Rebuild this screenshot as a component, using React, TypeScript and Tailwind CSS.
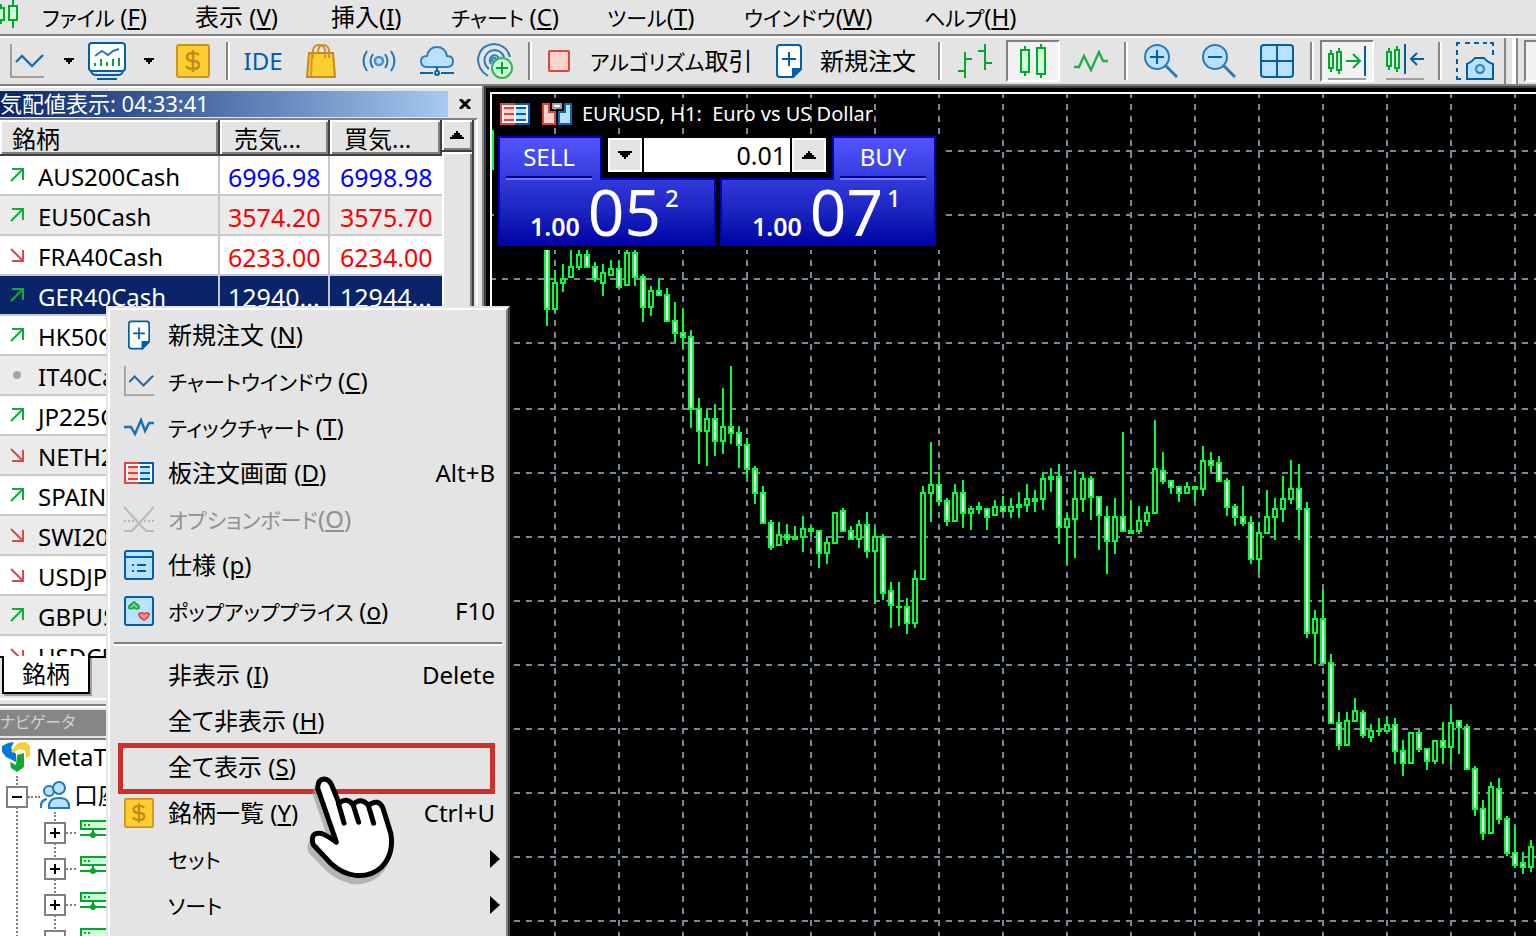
import type { ReactNode } from 'react';
import clsx from 'clsx';

type CandleKind = 'up' | 'down' | 'flat';
// high, body top, body bottom, low, kind
type Candle = [number, number, number, number, CandleKind];
type Direction = 'up' | 'down' | 'none';

interface SymbolRow {
    name: string;
    direction: Direction;
    bid?: string;
    ask?: string;
    tone?: 'blue' | 'red';
    selected?: boolean;
}

interface MenuEntry {
    label: string;
    mnemonic?: string;
    shortcut?: string;
    icon?: ReactNode;
    kana?: boolean;
    disabled?: boolean;
    submenu?: boolean;
    marked?: boolean;
}

const CHART_LEFT = 492;
const CHART_TOP = 94;

const CANDLES: Candle[] = [
    [250, 248, 310, 326, 'down'], [270, 282, 310, 312, 'up'], [264, 278, 284, 292, 'up'], [250, 266, 278, 278, 'up'],
    [250, 254, 268, 270, 'up'], [250, 254, 268, 268, 'down'], [262, 266, 280, 282, 'down'], [264, 272, 284, 296, 'up'],
    [260, 268, 276, 276, 'up'], [260, 268, 288, 288, 'down'], [250, 252, 286, 286, 'up'], [250, 252, 278, 286, 'down'],
    [274, 276, 308, 322, 'down'], [286, 290, 308, 316, 'up'], [278, 290, 296, 296, 'down'], [288, 294, 322, 322, 'down'],
    [302, 320, 334, 342, 'down'], [308, 332, 338, 348, 'down'], [330, 336, 410, 428, 'down'], [398, 408, 432, 464, 'down'],
    [410, 418, 432, 466, 'up'], [404, 418, 442, 456, 'down'], [388, 426, 442, 454, 'up'], [366, 426, 434, 444, 'down'],
    [426, 432, 446, 468, 'down'], [438, 444, 470, 478, 'down'], [466, 468, 494, 504, 'down'], [486, 492, 524, 524, 'down'],
    [520, 522, 548, 550, 'down'], [522, 534, 546, 546, 'up'], [524, 534, 540, 544, 'down'], [526, 536, 540, 540, 'flat'],
    [516, 528, 538, 552, 'up'], [526, 528, 532, 536, 'flat'], [530, 530, 554, 568, 'down'], [538, 542, 554, 564, 'up'],
    [512, 512, 544, 544, 'up'], [508, 510, 532, 532, 'down'], [526, 530, 540, 540, 'down'], [520, 524, 540, 548, 'up'],
    [512, 524, 552, 558, 'down'], [528, 536, 552, 604, 'up'], [534, 536, 594, 600, 'down'], [582, 590, 606, 628, 'down'],
    [582, 606, 608, 626, 'flat'], [598, 606, 624, 634, 'down'], [570, 578, 624, 628, 'up'], [486, 492, 580, 580, 'up'],
    [442, 484, 494, 522, 'up'], [472, 484, 502, 506, 'down'], [498, 500, 522, 526, 'down'], [484, 492, 522, 522, 'up'],
    [480, 492, 514, 528, 'down'], [506, 508, 514, 530, 'up'], [502, 506, 510, 514, 'flat'], [508, 508, 518, 530, 'down'],
    [500, 506, 516, 516, 'up'], [496, 506, 512, 512, 'down'], [498, 506, 512, 518, 'up'], [492, 504, 508, 518, 'flat'],
    [484, 498, 506, 512, 'up'], [490, 498, 502, 512, 'flat'], [472, 478, 500, 510, 'up'], [468, 476, 480, 492, 'flat'],
    [464, 476, 528, 544, 'down'], [514, 518, 528, 564, 'up'], [470, 498, 520, 558, 'up'], [472, 478, 500, 512, 'up'],
    [476, 478, 498, 520, 'down'], [496, 496, 516, 550, 'down'], [506, 516, 542, 574, 'down'], [498, 516, 542, 554, 'up'],
    [432, 516, 532, 532, 'down'], [500, 530, 534, 534, 'flat'], [506, 520, 532, 534, 'up'], [506, 512, 522, 526, 'up'],
    [420, 468, 514, 514, 'up'], [452, 470, 482, 484, 'down'], [480, 480, 488, 494, 'down'], [486, 486, 494, 502, 'down'],
    [482, 486, 494, 494, 'up'], [486, 486, 490, 502, 'flat'], [446, 460, 490, 496, 'up'], [452, 460, 466, 472, 'down'],
    [456, 462, 482, 482, 'down'], [478, 480, 508, 516, 'down'], [504, 506, 518, 526, 'down'], [486, 516, 524, 526, 'down'],
    [516, 522, 560, 564, 'down'], [522, 532, 560, 572, 'up'], [490, 516, 534, 534, 'up'], [498, 508, 518, 540, 'up'],
    [476, 498, 510, 522, 'up'], [460, 488, 500, 504, 'up'], [464, 488, 510, 540, 'down'], [502, 508, 634, 638, 'down'],
    [610, 618, 634, 664, 'up'], [590, 618, 664, 664, 'down'], [654, 662, 724, 724, 'down'], [712, 722, 746, 750, 'down'],
    [712, 720, 746, 746, 'up'], [698, 710, 722, 722, 'up'], [710, 712, 736, 738, 'down'], [724, 730, 738, 742, 'up'],
    [718, 730, 732, 736, 'flat'], [716, 724, 732, 732, 'up'], [718, 724, 752, 764, 'down'], [740, 750, 764, 776, 'down'],
    [732, 732, 764, 764, 'up'], [730, 732, 750, 752, 'down'], [748, 748, 762, 770, 'down'], [740, 740, 762, 764, 'up'],
    [722, 740, 748, 764, 'down'], [708, 722, 748, 764, 'up'], [720, 720, 728, 754, 'down'], [724, 726, 770, 770, 'down'],
    [766, 768, 810, 816, 'down'], [800, 808, 834, 840, 'down'], [782, 786, 834, 834, 'up'], [778, 788, 820, 824, 'down'],
    [816, 818, 854, 856, 'down'], [826, 852, 866, 868, 'down'], [852, 862, 868, 874, 'down'], [840, 846, 868, 872, 'up'],
];

const GRID_X = Array.from({ length: 32 }, (_, i) => 555 + i * 64);
const GRID_Y = [151, 215, 279, 343, ...Array.from({ length: 20 }, (_, i) => 409 + i * 64)];

const SYMBOLS: SymbolRow[] = [
    { name: 'AUS200Cash', direction: 'up', bid: '6996.98', ask: '6998.98', tone: 'blue' },
    { name: 'EU50Cash', direction: 'up', bid: '3574.20', ask: '3575.70', tone: 'red' },
    { name: 'FRA40Cash', direction: 'down', bid: '6233.00', ask: '6234.00', tone: 'red' },
    { name: 'GER40Cash', direction: 'up', bid: '12940...', ask: '12944...', selected: true },
    { name: 'HK50Cash', direction: 'up' },
    { name: 'IT40Cash', direction: 'none' },
    { name: 'JP225Cash', direction: 'up' },
    { name: 'NETH25Cash', direction: 'down' },
    { name: 'SPAIN35Cash', direction: 'up' },
    { name: 'SWI20Cash', direction: 'down' },
    { name: 'USDJPY', direction: 'down' },
    { name: 'GBPUSD', direction: 'up' },
    { name: 'USDCHF', direction: 'down' },
];

const MENU_BAR = [
    { label: 'ファイル ', key: 'F', width: 'w-[153px]', kana: true },
    { label: '表示 ', key: 'V', width: 'w-[136px]' },
    { label: '挿入', key: 'I', width: 'w-[120px]' },
    { label: 'チャート ', key: 'C', width: 'w-[156px]', kana: true },
    { label: 'ツール', key: 'T', width: 'w-[137px]', kana: true },
    { label: 'ウインドウ', key: 'W', width: 'w-[180px]', kana: true },
    { label: 'ヘルプ', key: 'H', width: 'w-[120px]', kana: true },
];

/* ---------- icons ---------- */

function LineChartIcon({ className }: { className?: string }) {
    return (
        <svg viewBox="0 0 34 34" className={className} fill="none" strokeWidth="2">
            <path d="M1 0V33H34" stroke="#a0a0a0" />
            <path d="M6 18L12 12L22 22L33 11" stroke="#1a6fb0" strokeWidth="2.4" />
        </svg>
    );
}

function MonitorChartIcon() {
    return (
        <svg viewBox="0 0 38 38" className="h-[38px] w-[38px]" fill="none" strokeWidth="2">
            <rect x="1" y="1" width="36" height="28" rx="3" fill="#fff" stroke="#005fa8" />
            <path d="M7 14L14 9L20 13L25 9L31 7" stroke="#2a7ab5" />
            <path d="M7 24V21M13 24V17M19 24V20M25 24V17M31 24V16" stroke="#00a82d" />
            <path d="M3 29Q4 33 8 33H30Q34 33 35 29M9 37H29" stroke="#005fa8" />
        </svg>
    );
}

function DollarIcon({ className }: { className?: string }) {
    return (
        <svg viewBox="0 0 34 34" className={className} fill="none">
            <rect x="1" y="1" width="32" height="32" rx="2" fill="#fccf2f" stroke="#d0901c" strokeWidth="2" />
            <path d="M23 11Q21 9 17 9Q11 9 11 13Q11 17 17 17Q23 17 23 21Q23 25 17 25Q12 25 10 22M17 6V28" stroke="#c98a1c" strokeWidth="2.6" />
        </svg>
    );
}

function BagIcon() {
    return (
        <svg viewBox="0 0 30 34" className="h-[34px] w-[30px]" fill="none" strokeWidth="2">
            <path d="M3 9H27L29 33H1Z" fill="#fccf2f" stroke="#c9871c" />
            <path d="M6 10L5 32" stroke="#d79a24" />
            <path d="M7 14V6Q8 1 13 1Q18 1 19 6V14M12 9Q12 1 17 1Q22 1 23 6V14" stroke="#c9903a" />
        </svg>
    );
}

function SignalIcon() {
    return (
        <svg viewBox="0 0 34 22" className="h-[22px] w-[34px]" fill="none" stroke="#2376b4" strokeWidth="2">
            <circle cx="17" cy="11" r="4" fill="#b9e2ff" stroke="#4b90c4" strokeWidth="2.6" />
            <path d="M5 1Q-2 11 5 21M11 4Q6 11 11 18M29 1Q36 11 29 21M23 4Q28 11 23 18" />
        </svg>
    );
}

function CloudIcon() {
    return (
        <svg viewBox="0 0 34 30" className="h-[30px] w-[34px]" fill="none" stroke="#0a64aa" strokeWidth="2">
            <path d="M7 21Q1 21 1 15Q1 10 7 10Q9 1 17 1Q25 1 27 10Q33 10 33 15Q33 21 27 21Z" fill="#b9e2ff" stroke="#2f7fba" />
            <path d="M17 21V25M0 27H13M21 27H34" />
            <circle cx="17" cy="27" r="2" />
        </svg>
    );
}

function RadarIcon() {
    return (
        <svg viewBox="0 0 36 36" className="h-9 w-9" fill="none" strokeWidth="2">
            <path d="M11 33Q1 27 1 16Q3 2 17 1Q30 2 33 14M12 26Q6 21 8 14Q11 7 18 7Q25 8 27 14M14 21Q11 16 15 13Q19 11 22 15" stroke="#2f7cb8" />
            <circle cx="17" cy="17" r="2" stroke="#2f7cb8" fill="#b9e2ff" />
            <circle cx="25" cy="25" r="10" fill="#cfffd8" stroke="#2fb850" />
            <path d="M25 19V31M19 25H31" stroke="#00a82d" />
        </svg>
    );
}

function StopIcon() {
    return (
        <svg viewBox="0 0 22 22" className="h-[22px] w-[22px]">
            <rect x="1" y="1" width="20" height="20" rx="1" fill="#ffd3cb" stroke="#e0443a" strokeWidth="2" />
        </svg>
    );
}

function NewOrderIcon({ className }: { className?: string }) {
    return (
        <svg viewBox="0 0 26 34" className={className} fill="none" stroke="#005fa8" strokeWidth="2">
            <path d="M4 1H22Q25 1 25 4V25L17 33H4Q1 33 1 30V4Q1 1 4 1Z" fill="#fff" />
            <path d="M17 33V25H25Z" fill="#005fa8" />
            <path d="M13 8V22M6 15H20" />
        </svg>
    );
}

function BarsIcon() {
    return (
        <svg viewBox="0 0 34 34" className="h-[34px] w-[34px]" fill="none" stroke="#00a82d" strokeWidth="2">
            <path d="M7 8V34M0 27H7M7 15H14M27 0V26M20 7H27M27 19H34" />
        </svg>
    );
}

function CandlesIcon() {
    return (
        <svg viewBox="0 0 28 34" className="h-[34px] w-7" fill="#cfffd8" stroke="#00a82d" strokeWidth="2">
            <path d="M6 2V6M6 28V32M22 0V4M22 30V34" />
            <rect x="2" y="6" width="8" height="22" />
            <rect x="18" y="4" width="8" height="26" />
        </svg>
    );
}

function ZigzagIcon() {
    return (
        <svg viewBox="0 0 34 22" className="h-[22px] w-[34px]" fill="none" stroke="#20b045" strokeWidth="2.4">
            <path d="M0 17H5L10 6L17 20L25 2L29 11H34" />
        </svg>
    );
}

function ZoomIcon({ plus }: { plus?: boolean }) {
    return (
        <svg viewBox="0 0 34 34" className="h-[34px] w-[34px]" fill="none" stroke="#005fa8" strokeWidth="2">
            <circle cx="13" cy="13" r="12" fill="#b9e2ff" stroke="#2b7bb6" />
            <path d="M22 22L33 33" stroke="#2b7bb6" strokeWidth="3" />
            <path d="M6 13H20" />
            {plus && <path d="M13 6V20" />}
        </svg>
    );
}

function TilesIcon() {
    return (
        <svg viewBox="0 0 34 34" className="h-[34px] w-[34px]" fill="none" stroke="#005fa8" strokeWidth="2">
            <rect x="1" y="1" width="32" height="32" rx="3" fill="#b9e2ff" />
            <path d="M17 1V33M1 17H33" />
        </svg>
    );
}

function AutoScrollIcon() {
    return (
        <svg viewBox="0 0 38 38" className="h-[38px] w-[38px]" fill="none" stroke="#00a82d" strokeWidth="2">
            <path d="M3 8V12M3 26V30M11 6V10M11 28V32" />
            <path d="M1 12H5V26H1ZM9 10H13V28H9Z" fill="#cfffd8" />
            <path d="M18 19H31M25 12L32 19L25 26" />
            <path d="M37 4V34" stroke="#005fa8" />
            <path d="M0 37H38" stroke="#a0a0a0" />
        </svg>
    );
}

function ChartShiftIcon() {
    return (
        <svg viewBox="0 0 38 38" className="h-[38px] w-[38px]" fill="none" stroke="#00a82d" strokeWidth="2">
            <path d="M3 6V10M3 24V28M11 4V8M11 26V30" />
            <path d="M1 10H5V24H1ZM9 8H13V26H9Z" fill="#cfffd8" />
            <path d="M19 2V32M25 17H38M31 11L25 17L31 23" stroke="#005fa8" />
            <path d="M0 37H38" stroke="#a0a0a0" />
        </svg>
    );
}

function CameraIcon() {
    return (
        <svg viewBox="0 0 38 38" className="h-[38px] w-[38px]" fill="none" stroke="#005fa8" strokeWidth="2">
            <path d="M1 4V1H4M9 1H14M18 1H23M27 1H31M34 1H37V4M37 8V13M1 8V13M1 17V22M1 26V30M1 34V37H5" />
            <path d="M11 37V22Q16 20 19 16H28Q31 20 37 22V37Z" fill="#b9e2ff" />
            <circle cx="24" cy="27" r="4" stroke="#3c86bc" strokeWidth="2.4" />
        </svg>
    );
}

function TickChartIcon() {
    return (
        <svg viewBox="0 0 30 20" className="h-5 w-[30px]" fill="none" stroke="#1a6fb0" strokeWidth="2.4">
            <path d="M0 10H7L11 17L17 3L21 14L25 6H30" />
        </svg>
    );
}

function DepthIcon() {
    return (
        <svg viewBox="0 0 30 22" className="h-[22px] w-[30px]" fill="none" strokeWidth="2">
            <path d="M0 0H15V22H0Z" fill="#e0443a" />
            <path d="M15 0H30V22H15Z" fill="#005fa8" />
            <path d="M2 2H28V20H2Z" fill="#fff" />
            <path d="M4 4H14V18H4Z" fill="#ffd3cb" />
            <path d="M16 4H26V18H16Z" fill="#b9e2ff" />
            <path d="M4 5H14M4 11H14M4 17H14" stroke="#e0443a" />
            <path d="M16 5H26M16 11H26M16 17H26" stroke="#005fa8" />
        </svg>
    );
}

function OneClickIcon() {
    return (
        <svg viewBox="0 0 30 22" className="h-[22px] w-[30px]" fill="none" strokeWidth="2">
            <path d="M1 1H7V9H13V21H1Z" fill="#ffd3cb" stroke="#e0443a" />
            <path d="M29 1H23V9H17V21H29Z" fill="#b9e2ff" stroke="#0a68b0" />
            <path d="M10 0H20V6H10Z" fill="#a0a0a0" />
            <path d="M12 3H18" stroke="#fff" />
        </svg>
    );
}

function OptionsIcon() {
    return (
        <svg viewBox="0 0 30 26" className="h-[26px] w-[30px]" fill="none" stroke="#b8b8b8" strokeWidth="2">
            <path d="M0 1L22 25H30M30 1L8 25H0" />
            <path d="M0 15H30" strokeDasharray="2 2" />
        </svg>
    );
}

function SpecIcon() {
    return (
        <svg viewBox="0 0 30 30" className="h-[30px] w-[30px]" fill="none" stroke="#005fa8" strokeWidth="2">
            <rect x="1" y="1" width="28" height="28" rx="2" fill="#b9e2ff" />
            <path d="M1 7H29M8 15H10M13 15H22M8 21H10M13 21H22" />
        </svg>
    );
}

function PopupPricesIcon() {
    return (
        <svg viewBox="0 0 30 30" className="h-[30px] w-[30px]" fill="none" strokeWidth="2">
            <rect x="1" y="1" width="28" height="28" rx="2" fill="#b9e2ff" stroke="#005fa8" />
            <path d="M5 12Q5 9 8 8Q10 4 12 8Q15 9 15 12Q12 14 10 11Q8 14 5 12Z" fill="#7fdc98" stroke="#20a845" />
            <path d="M15 18Q17 16 20 18Q23 16 25 18Q25 21 20 24Q15 21 15 18Z" fill="#ff9d94" stroke="#dd4d48" />
        </svg>
    );
}

function DirectionIcon({ direction }: { direction: Direction }) {
    if (direction === 'none') {
        return <span className="mx-[3px] block h-2 w-2 rounded-full bg-[#a5a5a5]" />;
    }
    return (
        <svg viewBox="0 0 14 14" className="h-3.5 w-3.5" fill="none" strokeWidth="2">
            {direction === 'up' ? (
                <path d="M2 1H13V12M13 1L1 13" stroke="#12ab3b" />
            ) : (
                <path d="M13 2V13H2M1 1L13 13" stroke="#dd4840" />
            )}
        </svg>
    );
}

function MetaTraderIcon() {
    return (
        <svg viewBox="0 0 28 30" className="h-[30px] w-7">
            <path d="M0 4L6 1L12 0L9 6L14 12V20L4 15L0 10Z" fill="#0878d8" />
            <path d="M9 9L16 1L24 0L28 4V14L24 16L23 8L17 7L11 11Z" fill="#fccf2f" />
            <path d="M8 20L14 23L15 13L22 11V25L15 30L9 26Z" fill="#10a835" />
        </svg>
    );
}

function UsersIcon() {
    return (
        <svg viewBox="0 0 30 28" className="h-7 w-[30px] shrink-0" fill="#b9e2ff" stroke="#2279b8" strokeWidth="2">
            <circle cx="9" cy="10" r="5" />
            <path d="M1 27Q0 19 7 18" />
            <circle cx="19" cy="7" r="6" />
            <path d="M9 27Q8 17 19 17Q30 17 29 27Z" />
        </svg>
    );
}

function ServerIcon() {
    return (
        <svg viewBox="0 0 28 18" className="mb-2 h-[18px] w-7 shrink-0" fill="none" stroke="#00a82d" strokeWidth="2">
            <rect x="1" y="1" width="28" height="8" fill="#cfffd8" />
            <path d="M4 5H6M8 5H10M13 9V13M0 15H28" />
            <circle cx="13" cy="15" r="2" />
        </svg>
    );
}

function HandPointer() {
    return (
        <svg viewBox="50 640 270 340" className="pointer-events-none absolute left-[199px] top-[466px] h-[113px] w-[90px]" strokeLinejoin="round" strokeLinecap="round">
            <path
                transform="translate(-8 18)"
                d="M138 845L82 684Q82 656 100 655Q116 655 124 674L146 735Q165 708 190 735Q212 708 236 735Q266 708 280 742L302 830Q310 890 270 925Q235 952 190 945Q150 935 120 908L68 855Q60 815 95 820Z"
                fill="#9a9d9d"
                stroke="#9a9d9d"
                strokeWidth="14"
                opacity="0.65"
            />
            <path
                d="M138 845L82 684Q82 656 100 655Q116 655 124 674L146 728Q168 708 188 732Q212 708 234 734Q264 712 278 742L302 820Q312 880 274 920Q240 950 195 945Q155 940 120 908L68 852Q58 815 92 819Q108 824 138 845Z"
                fill="#fff"
                stroke="#000"
                strokeWidth="15"
            />
            <path d="M144 728L161 788M188 732L205 785M234 734L250 788" fill="none" stroke="#000" strokeWidth="15" />
        </svg>
    );
}

const CONTEXT_MENU: MenuEntry[][] = [
    [
        { label: '新規注文 ', mnemonic: 'N', icon: <NewOrderIcon className="h-[30px] w-[22px]" /> },
        { label: 'チャートウインドウ ', mnemonic: 'C', icon: <LineChartIcon className="h-[30px] w-[30px]" />, kana: true },
        { label: 'ティックチャート ', mnemonic: 'T', icon: <TickChartIcon />, kana: true },
        { label: '板注文画面 ', mnemonic: 'D', shortcut: 'Alt+B', icon: <DepthIcon /> },
        { label: 'オプションボード', mnemonic: 'O', icon: <OptionsIcon />, kana: true, disabled: true },
        { label: '仕様 ', mnemonic: 'p', icon: <SpecIcon /> },
        { label: 'ポップアッププライス ', mnemonic: 'o', shortcut: 'F10', icon: <PopupPricesIcon />, kana: true },
    ],
    [
        { label: '非表示 ', mnemonic: 'I', shortcut: 'Delete' },
        { label: '全て非表示 ', mnemonic: 'H' },
        { label: '全て表示 ', mnemonic: 'S', marked: true },
        { label: '銘柄一覧 ', mnemonic: 'Y', shortcut: 'Ctrl+U', icon: <DollarIcon className="h-[30px] w-[30px]" /> },
        { label: 'セット', submenu: true, kana: true },
        { label: 'ソート', submenu: true, kana: true },
    ],
];

/* ---------- building blocks ---------- */

function Mnemonic({ label, char, kana }: { label: string; char?: string; kana?: boolean }) {
    return (
        <span className="whitespace-pre">
            <span className={clsx(kana && 'text-[21px]')}>{label}</span>
            {char && (
                <>
                    (<u className="decoration-2 underline-offset-2">{char}</u>)
                </>
            )}
        </span>
    );
}

function Caret({ up }: { up?: boolean }) {
    return (
        <svg viewBox="0 0 14 8" className={clsx('h-2 w-3.5', up && 'rotate-180')} shapeRendering="crispEdges">
            <path d="M0 0H14V2H12V4H10V6H8V8H6V6H4V4H2V2H0Z" fill="#000" />
        </svg>
    );
}

function DropButton({ label, className }: { label: string; className: string }) {
    return (
        <button type="button" aria-label={label} className={clsx('w-2.5 shrink-0', className)}>
            <svg viewBox="0 0 10 6" className="h-1.5 w-2.5" shapeRendering="crispEdges">
                <path d="M0 0H10V2H8V4H6V6H4V4H2V2H0Z" fill="#000" />
            </svg>
        </button>
    );
}

function Separator() {
    return <span className="mx-1 h-[38px] w-1 shrink-0 border-l-2 border-r-2 border-l-[#868686] border-r-white" />;
}

function ToolButton({ label, pressed, children }: { label: string; pressed?: boolean; children: ReactNode }) {
    return (
        <button type="button" aria-label={label} aria-pressed={pressed} className="flex h-[42px] w-[58px] shrink-0 items-center justify-center">
            {pressed ? (
                <span className="flex h-[42px] w-[54px] items-center justify-center border-2 border-b-white border-l-[#808080] border-r-white border-t-[#808080] bg-[#f2f2f2]">
                    {children}
                </span>
            ) : (
                children
            )}
        </button>
    );
}

function MenuBar() {
    return (
        <nav className="flex h-9 shrink-0 items-center border-b-2 border-[#808080]">
            <svg viewBox="0 0 20 28" className="mr-[22px] h-7 w-5 shrink-0 self-start" fill="#cfffd8" stroke="#00a82d" strokeWidth="2">
                <path d="M-2 8H4V20H-2ZM1 20V24M1 4V8" />
                <path d="M9 6H17V20H9ZM13 0V6M13 20V28" />
            </svg>
            {MENU_BAR.map((item) => (
                <button key={item.key} type="button" className={clsx('shrink-0 text-left', item.width)}>
                    <Mnemonic label={item.label} char={item.key} kana={item.kana} />
                </button>
            ))}
        </nav>
    );
}

function Toolbar() {
    return (
        <div className="flex h-[50px] shrink-0 items-center overflow-hidden border-b-2 border-t-2 border-b-[#808080] border-t-white pl-2.5">
            <button type="button" aria-label="Chart" className="shrink-0">
                <LineChartIcon className="h-[34px] w-[34px]" />
            </button>
            <DropButton label="Chart list" className="ml-5 mr-3.5" />
            <button type="button" aria-label="Profile" className="shrink-0">
                <MonitorChartIcon />
            </button>
            <DropButton label="Profile list" className="ml-[18px] mr-[22px]" />
            <button type="button" aria-label="Symbols" className="mr-3 shrink-0">
                <DollarIcon className="h-[34px] w-[34px]" />
            </button>
            <Separator />
            <ToolButton label="IDE">
                <span className="text-[#005fa8]">IDE</span>
            </ToolButton>
            <ToolButton label="Market"><BagIcon /></ToolButton>
            <ToolButton label="Signals"><SignalIcon /></ToolButton>
            <ToolButton label="VPS"><CloudIcon /></ToolButton>
            <ToolButton label="Copy"><RadarIcon /></ToolButton>
            <Separator />
            <button type="button" className="-ml-1 flex w-[228px] shrink-0 items-center gap-5 whitespace-nowrap pl-4">
                <StopIcon />
                <span>
                    <span className="text-[21px]">アルゴリズム</span>取引
                </span>
            </button>
            <button type="button" className="-mr-1 flex w-[178px] shrink-0 items-center gap-[18px] whitespace-nowrap pl-4">
                <NewOrderIcon className="h-[34px] w-[26px]" />
                新規注文
            </button>
            <Separator />
            <ToolButton label="Bars"><BarsIcon /></ToolButton>
            <ToolButton label="Candles" pressed><CandlesIcon /></ToolButton>
            <ToolButton label="Line"><ZigzagIcon /></ToolButton>
            <Separator />
            <ToolButton label="Zoom in"><ZoomIcon plus /></ToolButton>
            <ToolButton label="Zoom out"><ZoomIcon /></ToolButton>
            <ToolButton label="Tile windows"><TilesIcon /></ToolButton>
            <Separator />
            <ToolButton label="Auto scroll" pressed><AutoScrollIcon /></ToolButton>
            <ToolButton label="Chart shift"><ChartShiftIcon /></ToolButton>
            <Separator />
            <ToolButton label="Screenshot"><CameraIcon /></ToolButton>
            <span className="h-full w-3.5 shrink-0 border-l-2 border-r-2 border-[#868686] shadow-[inset_-4px_0_0_#fff]" />
            <span className="ml-1.5 h-[42px] w-14 shrink-0 border-2 border-b-white border-l-[#808080] border-t-[#808080] bg-[#f2f2f2]" />
        </div>
    );
}

function HeaderCell({ children, className }: { children: string; className: string }) {
    return (
        <th
            className={clsx(
                'h-9 border-b-2 border-r-2 border-[#404040] bg-[#e4e4e4] p-0 pt-1 text-left leading-7 font-normal shadow-[inset_2px_2px_0_#fff,inset_-2px_-2px_0_#808080]',
                className,
            )}
        >
            {children}
        </th>
    );
}

function PriceCell({ row, value, last }: { row: SymbolRow; value?: string; last?: boolean }) {
    return (
        <td
            className={clsx(
                'border-b-2 border-[#c8c8c8] p-0 pt-1 text-[25px]',
                last ? 'pl-2.5' : 'border-r-2 pl-2',
                row.tone === 'blue' && 'text-[#0000ff]',
                row.tone === 'red' && 'text-[#ff0000]',
            )}
        >
            {value}
        </td>
    );
}

function MarketWatch() {
    return (
        <section className="shrink-0 border-t-2 border-white">
            <div className="flex h-[30px] items-center pt-0.5">
                <h2 className="h-[26px] w-[448px] whitespace-nowrap bg-linear-to-r from-[#0a246a] to-[#a6caf0] text-[22px] leading-[24px] text-white">
                    気配値表示: 04:33:41
                </h2>
                <button type="button" aria-label="Close" className="flex flex-1 items-center justify-center">
                    <svg viewBox="0 0 12 10" className="h-2.5 w-3" stroke="#000" strokeWidth="3">
                        <path d="M1 0L11 10M11 0L1 10" />
                    </svg>
                </button>
            </div>
            <div className="flex h-[538px] w-[478px] overflow-hidden border-r-2 border-t-2 border-r-white border-t-[#808080]">
                <table className="w-[442px] shrink-0 table-fixed border-separate border-spacing-0 self-start bg-white">
                    <thead>
                        <tr>
                            <HeaderCell className="w-[220px] pl-3">銘柄</HeaderCell>
                            <HeaderCell className="w-[110px] pl-3.5">売気...</HeaderCell>
                            <HeaderCell className="w-[112px] pl-3.5">買気...</HeaderCell>
                        </tr>
                    </thead>
                    <tbody>
                        {SYMBOLS.map((row) => (
                            <tr key={row.name} className={clsx('h-10', row.selected ? 'bg-[#0a246a] text-white' : 'even:bg-[#ebebeb]')}>
                                <td className="border-b-2 border-r-2 border-[#c8c8c8] p-0">
                                    <div className="flex items-center gap-3.5 pl-2.5">
                                        <DirectionIcon direction={row.direction} />
                                        <span className="pt-1">{row.name}</span>
                                    </div>
                                </td>
                                <PriceCell row={row} value={row.bid} />
                                <PriceCell row={row} value={row.ask} last />
                            </tr>
                        ))}
                    </tbody>
                </table>
                <div className="flex w-8 flex-col">
                    <button
                        type="button"
                        aria-label="Scroll up"
                        className="flex h-8 items-center justify-center border-b-2 border-r-2 border-[#404040] shadow-[inset_2px_2px_0_#fff,inset_-2px_-2px_0_#808080]"
                    >
                        <Caret up />
                    </button>
                    <div className="flex-1 border-r-2 border-[#404040] shadow-[inset_2px_2px_0_#fff,inset_-2px_-2px_0_#808080]" />
                </div>
            </div>
            <div className="h-[42px] border-t-2 border-black pl-0.5">
                <button
                    type="button"
                    className="-mt-0.5 flex h-[38px] w-[88px] items-center justify-center border-2 border-t-0 border-black bg-white shadow-[2px_2px_0_#a0a0a0]"
                >
                    銘柄
                </button>
            </div>
        </section>
    );
}

function Expander({ open }: { open?: boolean }) {
    return (
        <button type="button" aria-expanded={!!open} aria-label="Toggle" className="relative shrink-0 border-2 border-[#808080] bg-white">
            <svg viewBox="0 0 18 18" className="h-[18px] w-[18px]" stroke="#000" strokeWidth="2">
                <path d={open ? 'M4 9H14' : 'M4 9H14M9 4V14'} />
            </svg>
        </button>
    );
}

function Navigator() {
    return (
        <section className="flex min-h-0 flex-1 flex-col border-t-2 border-white pt-1">
            <div className="border-b-2 border-t-2 border-[#808080]">
                <div className="border-t-2 border-white py-0.5">
                    <h2 className="h-[26px] bg-[#868686] text-[16px] leading-[24px] text-[#d4d0c8]">ナビゲータ</h2>
                </div>
            </div>
            <div className="relative flex-1 overflow-hidden bg-white">
                <span className="absolute left-4 top-9 h-full border-l-2 border-dotted border-[#808080]" />
                <span className="absolute left-[54px] top-[72px] h-full border-l-2 border-dotted border-[#808080]" />
                <div className="flex h-[39px] items-center gap-1.5 pb-1.5 pl-0.5">
                    <MetaTraderIcon />
                    MetaTrader 5
                </div>
                <div className="flex h-9 items-center pl-1.5">
                    <Expander open />
                    <span className="w-3 border-t-2 border-dotted border-[#808080]" />
                    <span className="pb-1">
                        <UsersIcon />
                    </span>
                    <span className="ml-1 pb-1">口座</span>
                </div>
                {['demo', 'real', 'live', 'test'].map((account) => (
                    <div key={account} className="flex h-9 items-center pl-11">
                        <Expander />
                        <span className="mr-1 w-2.5 border-t-2 border-dotted border-[#808080]" />
                        <ServerIcon />
                    </div>
                ))}
            </div>
        </section>
    );
}

function DealButton({ side, big, pip }: { side: 'SELL' | 'BUY'; big: string; pip: string }) {
    const sell = side === 'SELL';
    return (
        <button
            type="button"
            className={clsx(
                'relative h-[110px] bg-[#0000b4] text-left text-white',
                sell
                    ? 'w-[218px] [clip-path:polygon(0_0,104px_0,104px_42px,100%_42px,100%_100%,0_100%)]'
                    : 'w-[216px] [clip-path:polygon(112px_0,100%_0,100%_100%,0_100%,0_42px,112px_42px)]',
            )}
        >
            <span
                className={clsx(
                    'absolute inset-0.5 bg-linear-to-b from-[#5454ff] to-[#0000a4]',
                    sell
                        ? '[clip-path:polygon(0_0,100px_0,100px_42px,100%_42px,100%_100%,0_100%)]'
                        : '[clip-path:polygon(112px_0,100%_0,100%_100%,0_100%,0_42px,112px_42px)]',
                )}
            />
            <span
                className={clsx(
                    'relative block h-11 w-[86px] border-b-2 border-[#7878ff] text-center leading-[42px] shadow-[inset_0_-2px_0_#000090]',
                    sell ? 'ml-2' : 'ml-[120px]',
                )}
            >
                {side}
            </span>
            <span className="relative flex h-[66px] items-baseline pl-8">
                <span className="text-[25px] font-semibold">1.00</span>
                <span className="ml-2 text-[64px] leading-none">{big}</span>
                <span className="self-start pl-1 leading-9 font-medium">{pip}</span>
            </span>
        </button>
    );
}

function Chart() {
    return (
        <div className="relative min-w-0 flex-1 overflow-hidden border-l-2 border-t-2 border-white bg-black">
            <svg className="absolute inset-0 h-full w-full" shapeRendering="crispEdges">
                <g transform={`translate(${-CHART_LEFT} ${-CHART_TOP})`}>
                    <g stroke="#778899" strokeWidth="2" strokeDasharray="6 6">
                        {GRID_X.map((x) => (
                            <line key={x} x1={x} x2={x} y1="92" y2="2000" />
                        ))}
                        {GRID_Y.map((y) => (
                            <line key={y} x1="490" x2="3000" y1={y} y2={y} />
                        ))}
                    </g>
                    {CANDLES.map(([high, top, bottom, low, kind], i) => {
                        const x = 546 + i * 8;
                        return (
                            <g key={x}>
                                <rect x={x} y={high} width="2" height={low - high} fill="#00ff37" />
                                <rect x={x - 2} y={top} width="6" height={bottom - top} fill="#00ff37" />
                                {kind !== 'flat' && (
                                    <rect x={x} y={top + 2} width="2" height={bottom - top - 4} fill={kind === 'down' ? '#fff' : '#000'} />
                                )}
                            </g>
                        );
                    })}
                    <rect x="492" y="130" width="2" height="40" fill="#00ff37" />
                    <rect x="494" y="134" width="448" height="116" fill="#000" />
                </g>
            </svg>

            <div className="absolute left-2 top-2 flex h-6 items-center whitespace-pre text-[20px] text-white">
                <DepthIcon />
                <span className="ml-3">
                    <OneClickIcon />
                </span>
                <span className="ml-2.5">EURUSD, H1:  Euro vs US Dollar</span>
            </div>

            <div className="absolute left-1.5 top-[42px] flex gap-1">
                <DealButton side="SELL" big="05" pip="2" />
                <DealButton side="BUY" big="07" pip="1" />
                <div className="absolute left-[110px] top-0.5 flex gap-0.5">
                    <button type="button" aria-label="Decrease volume" className="flex h-[34px] w-[34px] items-center justify-center border-2 border-white bg-[#e4e4e4]">
                        <Caret />
                    </button>
                    <input
                        aria-label="Volume"
                        defaultValue="0.01"
                        className="h-[34px] w-[146px] rounded-none bg-white pr-1 text-right text-[25px] text-black outline-none"
                    />
                    <button type="button" aria-label="Increase volume" className="flex h-[34px] w-[34px] items-center justify-center border-2 border-white bg-[#e4e4e4]">
                        <Caret up />
                    </button>
                </div>
            </div>
        </div>
    );
}

function ContextMenu() {
    return (
        <div
            role="menu"
            className="absolute bottom-0 left-[106px] top-[306px] w-[404px] border-l-2 border-r-2 border-t-2 border-l-[#e4e4e4] border-r-[#404040] border-t-[#e4e4e4] bg-[#e4e4e4]"
        >
            <div className="h-full border-l-2 border-r-2 border-t-2 border-l-white border-r-[#808080] border-t-white pt-0.5">
                {CONTEXT_MENU.map((group, index) => (
                    <div key={index}>
                        {index > 0 && <div role="separator" className="mx-1 mb-1.5 mt-2 h-1 border-b-2 border-t-2 border-b-white border-t-[#808080]" />}
                        {group.map((entry) => (
                            <button
                                key={entry.label}
                                type="button"
                                role="menuitem"
                                disabled={entry.disabled}
                                className={clsx('relative flex h-[46px] w-full items-center text-left', entry.disabled && 'text-[#909090]')}
                            >
                                <span className="flex w-[58px] justify-center">{entry.icon}</span>
                                <Mnemonic label={entry.label} char={entry.mnemonic} kana={entry.kana} />
                                {entry.shortcut && <span className="ml-auto pr-[11px]">{entry.shortcut}</span>}
                                {entry.submenu && (
                                    <svg viewBox="0 0 10 18" className="ml-auto mr-1.5 h-[18px] w-2.5">
                                        <path d="M0 0L10 9L0 18Z" fill="#000" />
                                    </svg>
                                )}
                                {entry.marked && <span className="absolute -bottom-1 -top-px left-2 right-[11px] border-[5px] border-[#cd2f2c]" />}
                            </button>
                        ))}
                    </div>
                ))}
            </div>
            <HandPointer />
        </div>
    );
}

export default function App() {
    return (
        <div className="relative flex h-screen w-full flex-col overflow-hidden bg-[#e4e4e4] font-['Noto_Sans','Noto_Sans_CJK_JP',sans-serif] text-[24px] leading-8 font-normal text-black [font-feature-settings:'palt']">
            <MenuBar />
            <Toolbar />
            <div className="flex min-h-0 flex-1">
                <aside className="flex w-[482px] shrink-0 flex-col">
                    <MarketWatch />
                    <Navigator />
                </aside>
                <main className="flex min-w-0 flex-1 border-l-2 border-[#808080]">
                    <div className="flex min-w-0 flex-1 border-l-2 border-t-2 border-[#404040] bg-black pl-1 pt-1">
                        <Chart />
                    </div>
                </main>
            </div>
            <ContextMenu />
        </div>
    );
}
